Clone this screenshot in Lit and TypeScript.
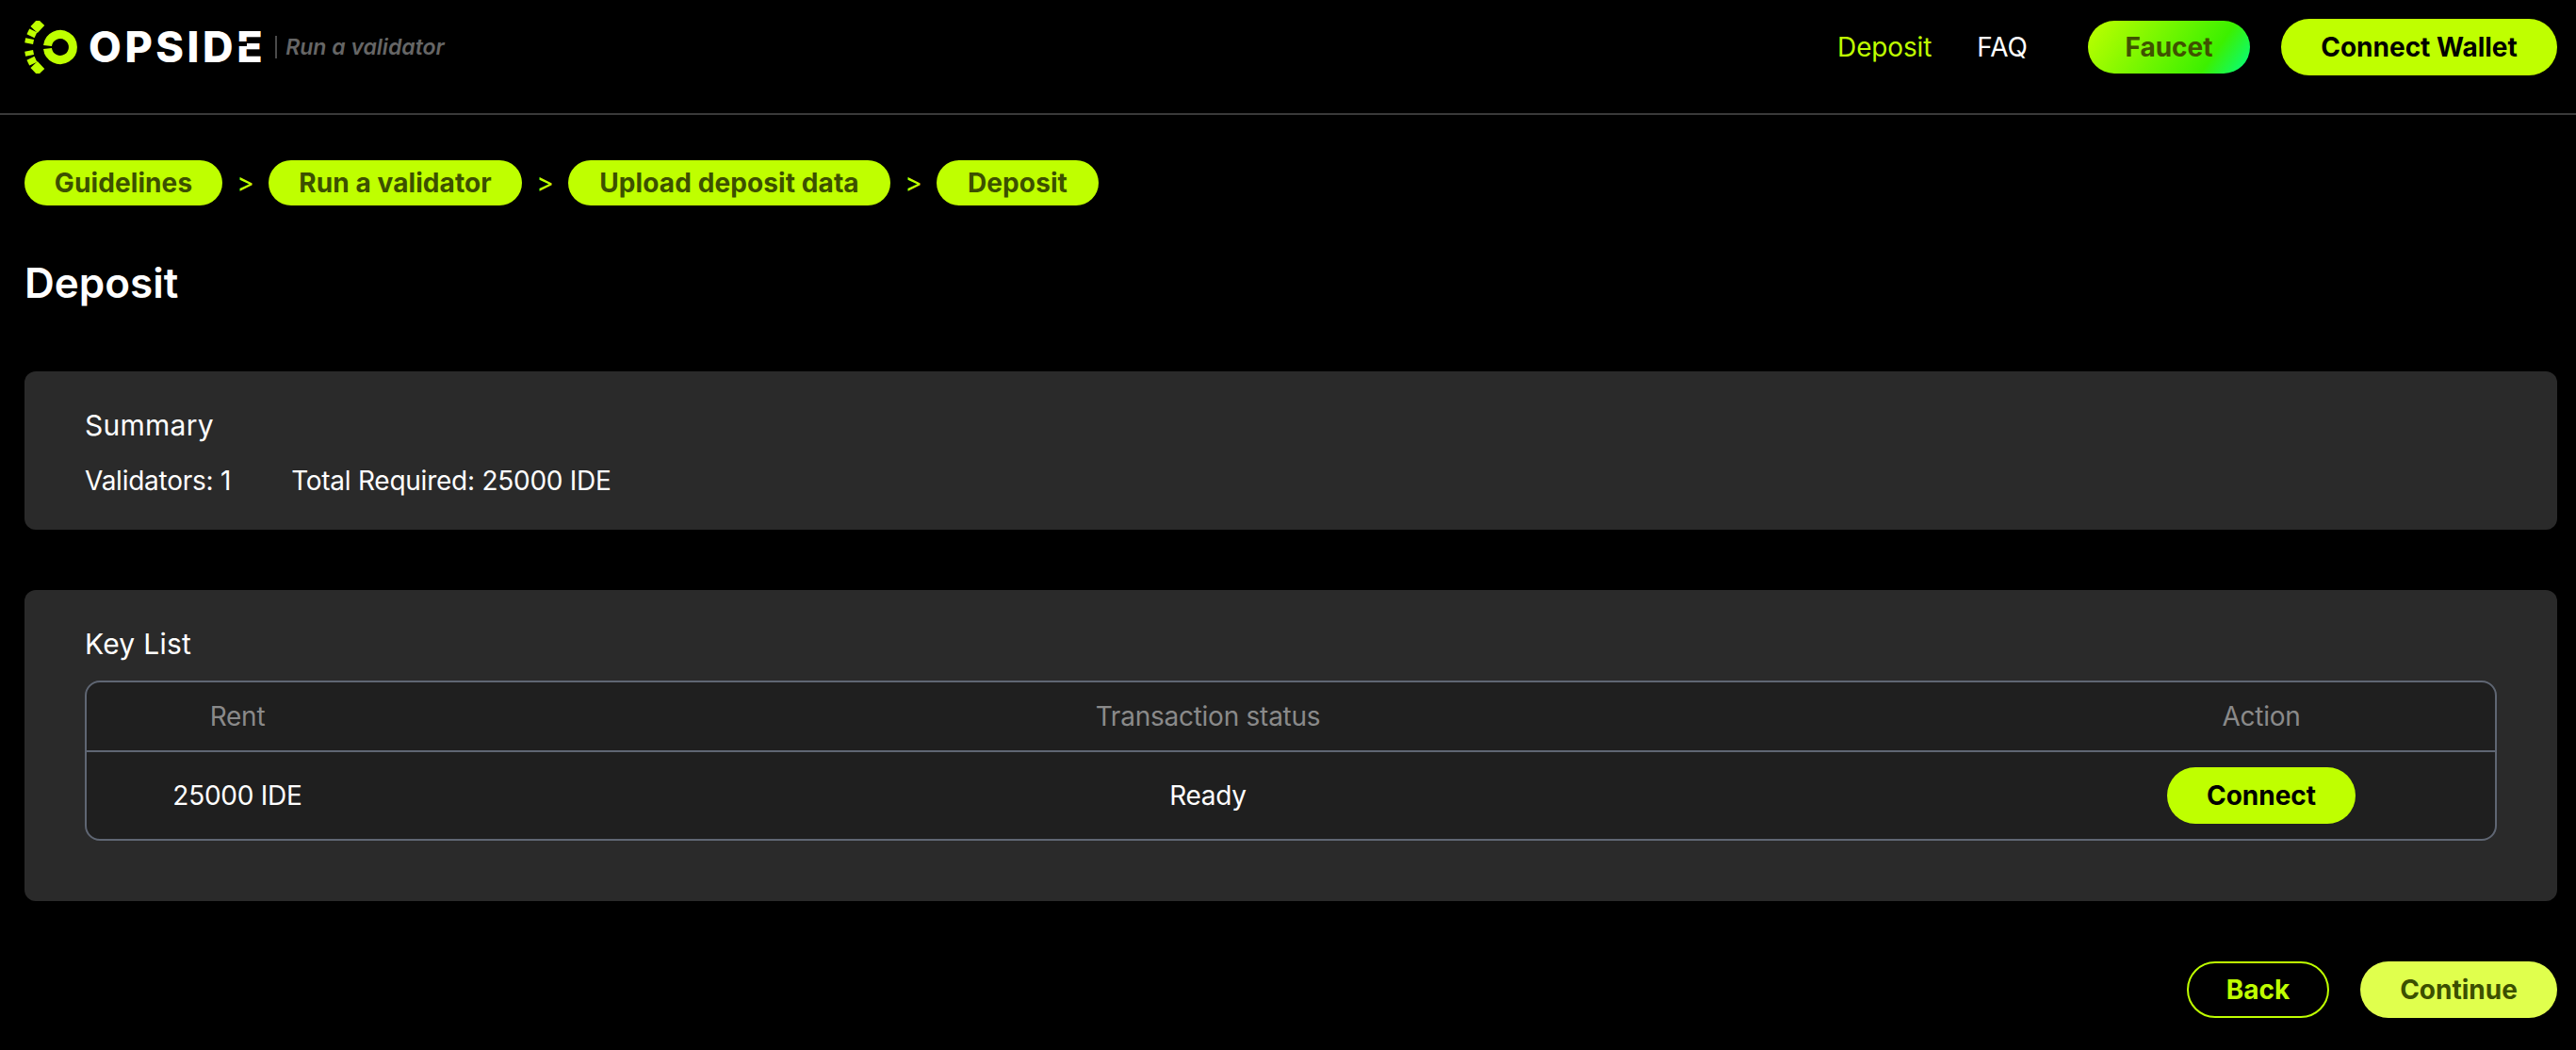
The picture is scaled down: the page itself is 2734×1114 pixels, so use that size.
import { LitElement, html, css, svg } from "lit";
import { customElement } from "lit/decorators.js";

const CX = 64 - 26;
const CY = 50 - 22;
const ticks = [
  { a: 43, w: 11, r0: 28, r1: 38 },
  { a: 26, w: 6.5, r0: 29, r1: 38 },
  { a: 11, w: 5, r0: 29, r1: 38 },
  { a: -11, w: 5, r0: 29, r1: 38 },
  { a: -26, w: 6.5, r0: 29, r1: 38 },
  { a: -43, w: 11, r0: 28, r1: 38 },
];

function tick(t: { a: number; w: number; r0: number; r1: number }) {
  const rad = (t.a * Math.PI) / 180;
  const ux = -Math.cos(rad);
  const uy = -Math.sin(rad);
  const x1 = CX + ux * t.r0;
  const y1 = CY + uy * t.r0;
  const x2 = CX + ux * t.r1;
  const y2 = CY + uy * t.r1;
  return svg`<line x1=${x1} y1=${y1} x2=${x2} y2=${y2} stroke="#bfff00" stroke-width=${t.w} />`;
}

@customElement("app-root")
export class AppRoot extends LitElement {
  static styles = css`
    :host {
      display: block;
      min-height: 100vh;
      background: #000;
      color: #fff;
      font-family: Inter, "Liberation Sans", sans-serif;
      font-size: 28px;
      letter-spacing: -0.25px;
    }
    * { box-sizing: border-box; }
    .header {
      display: flex;
      align-items: center;
      height: 122px;
      padding: 0 20px 20px 26px;
      border-bottom: 2px solid #3a3a3a;
    }
    .logo { display: flex; align-items: center; }
    .logo svg { display: block; width: 60px; height: 56px; flex: none; }
    .word {
      position: relative;
      margin-left: 8px;
      font-size: 45px;
      line-height: 56px;
      font-weight: 800;
      letter-spacing: 3.6px;
      color: #fff;
    }
    .word::after {
      content: "";
      position: absolute;
      right: 20px;
      top: 22px;
      width: 15px;
      height: 5px;
      background: #000;
    }
    .sub {
      margin-left: 10px;
      padding-left: 9px;
      border-left: 2px solid #4a4a4a;
      height: 24px;
      line-height: 24px;
      font-size: 23px;
      font-weight: 600;
      font-style: italic;
      letter-spacing: 0;
      color: #666;
      white-space: nowrap;
    }
    .nav { margin-left: auto; display: flex; align-items: center; letter-spacing: 0; }
    .link { font-size: 28px; color: #fff; }
    .link.on { color: #bfff00; margin-right: 48px; letter-spacing: -0.15px; }
    .link.faq { margin-right: 64px; }
    .btn {
      display: flex;
      align-items: center;
      justify-content: center;
      height: 60px;
      border-radius: 30px;
      background: #bfff00;
      color: #000;
      font-weight: 700;
      font-size: 28px;
      letter-spacing: 0;
      white-space: nowrap;
    }
    .faucet {
      width: 172px;
      height: 56px;
      margin-right: 33px;
      background: linear-gradient(125deg, #bfff00 0%, #3cf000 75%, #00ff88 100%);
      color: #3f5200;
    }
    .wallet { width: 293px; }
    .main { padding: 48px 20px 0 26px; }
    .crumbs { display: flex; align-items: center; }
    .crumb {
      height: 48px;
      border-radius: 24px;
      background: #bfff00;
      color: #3c5000;
      font-weight: 700;
      font-size: 28px;
      line-height: 48px;
      letter-spacing: 0.1px;
      text-align: center;
      white-space: nowrap;
    }
    .c1 { width: 210px; }
    .c2 { width: 269px; }
    .c3 { width: 342px; }
    .c4 { width: 172px; }
    .sep { width: 49px; text-align: center; color: #bfff00; font-size: 28px; line-height: 48px; letter-spacing: 0; }
    h1 {
      margin: 52px 0 0;
      font-size: 44px;
      line-height: 60px;
      font-weight: 600;
      letter-spacing: 0;
    }
    .card {
      background: #2a2a2a;
      border-radius: 12px;
      padding: 36px 64px 0;
    }
    .summary { margin-top: 64px; height: 168px; }
    .keys { margin-top: 64px; height: 330px; }
    .title { font-size: 30px; line-height: 42px; font-weight: 400; letter-spacing: 0.25px; }
    .stats { display: flex; gap: 64px; margin-top: 16px; line-height: 44px; }
    .table {
      margin-top: 18px;
      border: 2px solid #5f6673;
      border-radius: 16px;
      background: #1f1f1f;
      height: 170px;
    }
    .row {
      display: grid;
      grid-template-columns: 320px 1fr 496px;
      align-items: center;
      text-align: center;
    }
    .head { height: 74px; color: #8a8a8a; border-bottom: 2px solid #5f6673; }
    .body { height: 92px; }
    .cell-btn { display: flex; justify-content: center; }
    .connect { width: 200px; }
    .actions { display: flex; justify-content: flex-end; gap: 33px; margin-top: 64px; }
    .back {
      width: 151px;
      background: transparent;
      border: 2px solid #bfff00;
      color: #bfff00;
    }
    .continue { width: 209px; background: #e0ff4d; color: #3c5000; }
  `;

  render() {
    return html`
      <div class="header">
        <div class="logo">
          <svg viewBox="0 0 60 56" aria-hidden="true">
            ${ticks.map(tick)}
            <path
              d="M${CX - 13.5} ${CY - 1.5} A13.5 13.5 0 1 1 ${CX - 13.5} ${CY + 1.5}"
              fill="none"
              stroke="#bfff00"
              stroke-width="9"
            />
            <rect x=${CX - 18} y=${CY - 1} width="10" height="2" fill="#000" />
          </svg>
          <span class="word">OPSIDE</span>
          <span class="sub">Run a validator</span>
        </div>
        <div class="nav">
          <span class="link on">Deposit</span>
          <span class="link faq">FAQ</span>
          <div class="btn faucet">Faucet</div>
          <div class="btn wallet">Connect Wallet</div>
        </div>
      </div>
      <div class="main">
        <div class="crumbs">
          <div class="crumb c1">Guidelines</div>
          <div class="sep">&gt;</div>
          <div class="crumb c2">Run a validator</div>
          <div class="sep">&gt;</div>
          <div class="crumb c3">Upload deposit data</div>
          <div class="sep">&gt;</div>
          <div class="crumb c4">Deposit</div>
        </div>
        <h1>Deposit</h1>
        <div class="card summary">
          <div class="title">Summary</div>
          <div class="stats">
            <span>Validators: 1</span>
            <span>Total Required: 25000 IDE</span>
          </div>
        </div>
        <div class="card keys">
          <div class="title">Key List</div>
          <div class="table">
            <div class="row head">
              <span>Rent</span>
              <span>Transaction status</span>
              <span>Action</span>
            </div>
            <div class="row body">
              <span>25000 IDE</span>
              <span>Ready</span>
              <div class="cell-btn"><div class="btn connect">Connect</div></div>
            </div>
          </div>
        </div>
        <div class="actions">
          <div class="btn back">Back</div>
          <div class="btn continue">Continue</div>
        </div>
      </div>
    `;
  }
}
